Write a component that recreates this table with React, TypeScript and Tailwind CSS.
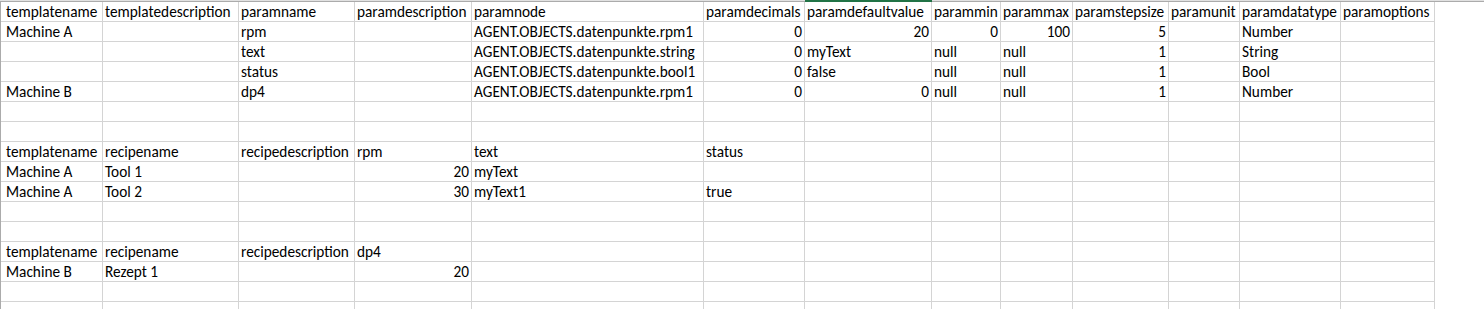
import React from "react";

type Cell = string | number;

const widths = [102, 136, 116, 117, 232, 101, 127, 69, 72, 96, 71, 101, 94];

const rows: Cell[][] = [
  [
    "templatename",
    "templatedescription",
    "paramname",
    "paramdescription",
    "paramnode",
    "paramdecimals",
    "paramdefaultvalue",
    "parammin",
    "parammax",
    "paramstepsize",
    "paramunit",
    "paramdatatype",
    "paramoptions",
  ],
  ["Machine A", "", "rpm", "", "AGENT.OBJECTS.datenpunkte.rpm1", 0, 20, 0, 100, 5, "", "Number"],
  ["", "", "text", "", "AGENT.OBJECTS.datenpunkte.string", 0, "myText", "null", "null", 1, "", "String"],
  ["", "", "status", "", "AGENT.OBJECTS.datenpunkte.bool1", 0, "false", "null", "null", 1, "", "Bool"],
  ["Machine B", "", "dp4", "", "AGENT.OBJECTS.datenpunkte.rpm1", 0, 0, "null", "null", 1, "", "Number"],
  [],
  [],
  ["templatename", "recipename", "recipedescription", "rpm", "text", "status"],
  ["Machine A", "Tool 1", "", 20, "myText"],
  ["Machine A", "Tool 2", "", 30, "myText1", "true"],
  [],
  [],
  ["templatename", "recipename", "recipedescription", "dp4"],
  ["Machine B", "Rezept 1", "", 20],
  [],
  [],
];

function Row({ cells }: { cells: Cell[] }) {
  return (
    <div className="flex h-[20px] shrink-0 border-b border-[#d4d4d4]">
      {widths.map((w, i) => {
        const v = cells[i];
        const isNum = typeof v === "number";
        return (
          <div
            key={i}
            style={{ width: w }}
            className={`flex h-full shrink-0 items-end whitespace-nowrap border-r border-[#d4d4d4] ${
              isNum ? "justify-end pr-[2px]" : "justify-start"
            } ${i === 0 ? "pl-[5px]" : "pl-[2px]"}`}
          >
            <span className="leading-[19px]">{v === undefined ? "" : String(v)}</span>
          </div>
        );
      })}
      <div className="h-full flex-1" />
    </div>
  );
}

export default function App() {
  return (
    <div
      className="relative h-[309px] w-[1484px] overflow-hidden bg-white text-[15.3px] text-black"
      style={{ fontFamily: "Carlito, Calibri, Lato, 'Liberation Sans', sans-serif" }}
    >
      <div className="flex h-[2px] flex-col">
        <div className="flex h-[1px]">
          <div className="h-full w-[805px] bg-[#e1e1e1]" />
          <div className="h-full w-[127px] bg-[#217346]" />
          <div className="h-full flex-1 bg-[#e1e1e1]" />
        </div>
        <div className="flex h-[1px]">
          <div className="h-full w-[805px] bg-[#ababab]" />
          <div className="h-full w-[127px] bg-[#217346]" />
          <div className="h-full flex-1 bg-[#ababab]" />
        </div>
      </div>
      <div className="flex border-l border-[#ababab]">
        <div className="flex flex-col">
          {rows.map((r, i) => (
            <Row key={i} cells={r} />
          ))}
        </div>
      </div>
    </div>
  );
}
